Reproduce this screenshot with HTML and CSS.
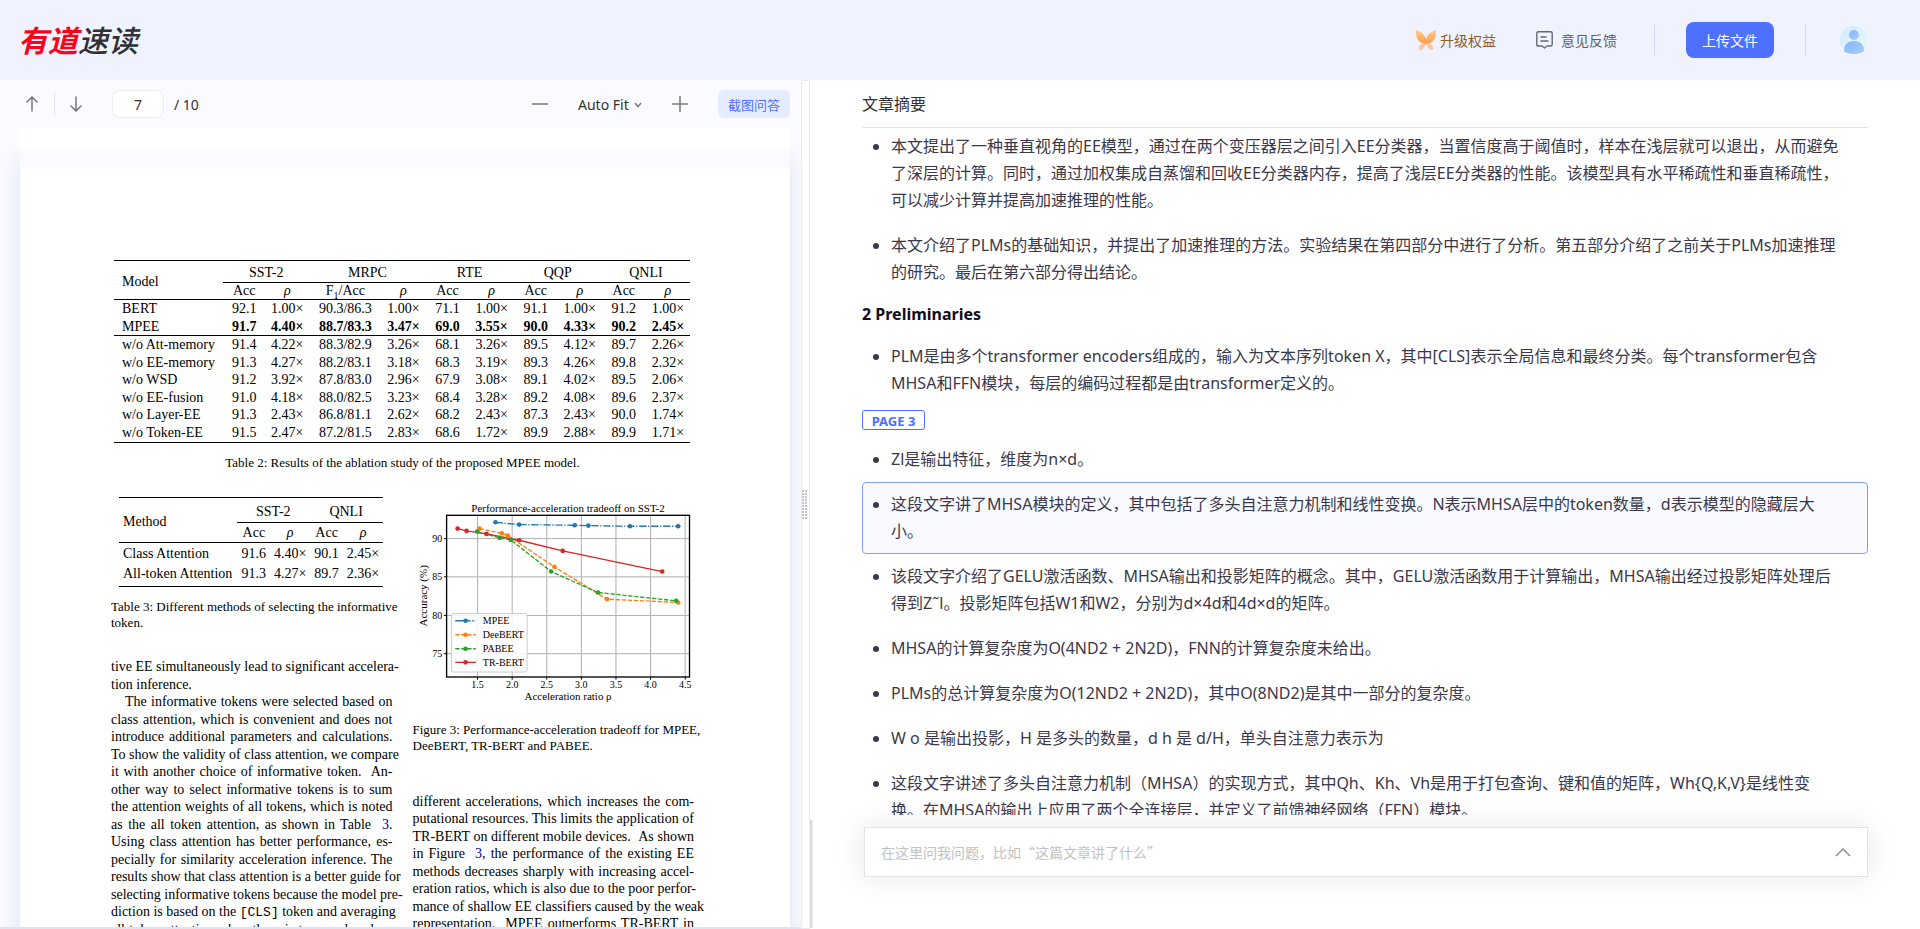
FILE: index.html
```html
<!DOCTYPE html>
<html lang="zh-CN">
<head>
<meta charset="utf-8">
<title>有道速读</title>
<link rel="stylesheet" href="styles.css">
</head>
<body>
<header class="topbar">
  <a class="logo" href="#"><span class="logo-red">有道</span><span class="logo-dark">速读</span></a>
  <nav class="topnav">
    <a class="upgrade" href="#">
      <svg width="20" height="20" viewBox="0 0 20 20" aria-hidden="true">
        <defs><linearGradient id="wing" x1="0" y1="0" x2="0" y2="1"><stop offset="0" stop-color="#ffce8f"/><stop offset="1" stop-color="#ff9a45"/></linearGradient></defs>
        <path d="M0 0C4 1 8.600 4 10 9C11.400 4 16 1 20 0C20.400 6 18.800 11.800 13.500 13.300L10 14.500L6.500 13.300C1.200 11.800-.4 6 0 0Z" fill="url(#wing)"/>
        <path d="M9.300 13.600C6 13.500 3 15 2.500 18.500C2.400 20 5 20.300 6.500 19.300C8.200 18 9 16 9.300 13.600ZM10.700 13.600C14 13.500 17 15 17.500 18.500C17.600 20 15 20.300 13.500 19.300C11.800 18 11 16 10.700 13.600Z" fill="#ffc59a"/>
      </svg>
      升级权益
    </a>
    <a class="feedback" href="#">
      <svg width="17" height="18" viewBox="0 0 17 18" fill="none" stroke="#666873" stroke-width="1.400" stroke-linejoin="round" stroke-linecap="round" aria-hidden="true">
        <path d="M2.200.8H14.800Q16.200.8 16.200 2.200V13.600Q16.200 15 14.800 15H11L8.500 17L6 15H2.200Q.8 15 .8 13.600V2.200Q.8.800 2.200.800Z"/>
        <path d="M5 6H10M5 10H12"/>
      </svg>
      意见反馈
    </a>
    <span class="bar"></span>
    <button class="upload" type="button">上传文件</button>
    <span class="bar"></span>
    <a class="avatar" href="#" aria-label="账户">
      <svg width="32" height="32" viewBox="0 0 32 32" aria-hidden="true">
        <defs>
          <linearGradient id="face" x1="0" y1="0" x2="1" y2="1"><stop offset="0" stop-color="#d3e9fd"/><stop offset="1" stop-color="#e9fbff"/></linearGradient>
          <linearGradient id="body" x1="0" y1="0" x2="1" y2="1"><stop offset="0" stop-color="#83b4fb"/><stop offset="1" stop-color="#a9cffe"/></linearGradient>
        </defs>
        <circle cx="16" cy="16" r="15" fill="url(#face)" stroke="#f7fbff"/>
        <circle cx="16" cy="11" r="5" fill="url(#body)"/>
        <path d="M6 27C6 20.500 10 17 16 17S26 20.500 26 27C23 31 9 31 6 27Z" fill="url(#body)"/>
      </svg>
    </a>
  </nav>
</header>

<main class="workspace">
  <section class="viewer">
    <div class="toolbar">
      <button class="tool" type="button" aria-label="上一页"><svg width="12" height="16" viewBox="0 0 12 16"><path d="M6 15.500V1M.5 6.500L6 1L11.500 6.500"/></svg></button>
      <span class="tool-bar"></span>
      <button class="tool" type="button" aria-label="下一页"><svg width="12" height="16" viewBox="0 0 12 16"><path d="M6 .5V15M.5 9.500L6 15L11.500 9.500"/></svg></button>
      <label class="pager"><input type="text" value="7" aria-label="页码"><span>/ 10</span></label>
      <div class="zoomer">
        <button class="tool" type="button" aria-label="缩小"><svg width="16" height="16" viewBox="0 0 16 16"><path d="M0 8H16"/></svg></button>
        <span class="fit">
          <select aria-label="缩放"><option>Auto Fit</option></select>
          <svg width="8" height="6" viewBox="0 0 8 6"><path d="M1 1L4 4.500L7 1"/></svg>
        </span>
        <button class="tool" type="button" aria-label="放大"><svg width="16" height="16" viewBox="0 0 16 16"><path d="M0 8H16M8 0V16"/></svg></button>
      </div>
      <button class="snap" type="button">截图问答</button>
    </div>

    <div class="pages">
      <div class="sheet sheet-prev"></div>
      <article class="sheet sheet-current">
        <table class="results">
          <colgroup><col class="c-name"><col class="c-acc"><col class="c-rho"><col class="c-wide"><col class="c-rho" span="7"></colgroup>
          <thead>
            <tr><th class="name" rowspan="2">Model</th><th class="sub" colspan="2">SST-2</th><th class="sub" colspan="2">MRPC</th><th class="sub" colspan="2">RTE</th><th class="sub" colspan="2">QQP</th><th class="sub" colspan="2">QNLI</th></tr>
            <tr><th>Acc</th><th><i>ρ</i></th><th>F<small>1</small>/Acc</th><th><i>ρ</i></th><th>Acc</th><th><i>ρ</i></th><th>Acc</th><th><i>ρ</i></th><th>Acc</th><th><i>ρ</i></th></tr>
          </thead>
          <tbody>
            <tr><td class="name">BERT</td><td>92.1</td><td>1.00×</td><td>90.3/86.3</td><td>1.00×</td><td>71.1</td><td>1.00×</td><td>91.1</td><td>1.00×</td><td>91.2</td><td>1.00×</td></tr>
            <tr class="best"><td class="name">MPEE</td><td>91.7</td><td>4.40×</td><td>88.7/83.3</td><td>3.47×</td><td>69.0</td><td>3.55×</td><td>90.0</td><td>4.33×</td><td>90.2</td><td>2.45×</td></tr>
          </tbody>
          <tbody>
            <tr><td class="name">w/o Att-memory</td><td>91.4</td><td>4.22×</td><td>88.3/82.9</td><td>3.26×</td><td>68.1</td><td>3.26×</td><td>89.5</td><td>4.12×</td><td>89.7</td><td>2.26×</td></tr>
            <tr><td class="name">w/o EE-memory</td><td>91.3</td><td>4.27×</td><td>88.2/83.1</td><td>3.18×</td><td>68.3</td><td>3.19×</td><td>89.3</td><td>4.26×</td><td>89.8</td><td>2.32×</td></tr>
            <tr><td class="name">w/o WSD</td><td>91.2</td><td>3.92×</td><td>87.8/83.0</td><td>2.96×</td><td>67.9</td><td>3.08×</td><td>89.1</td><td>4.02×</td><td>89.5</td><td>2.06×</td></tr>
            <tr><td class="name">w/o EE-fusion</td><td>91.0</td><td>4.18×</td><td>88.0/82.5</td><td>3.23×</td><td>68.4</td><td>3.28×</td><td>89.2</td><td>4.08×</td><td>89.6</td><td>2.37×</td></tr>
            <tr><td class="name">w/o Layer-EE</td><td>91.3</td><td>2.43×</td><td>86.8/81.1</td><td>2.62×</td><td>68.2</td><td>2.43×</td><td>87.3</td><td>2.43×</td><td>90.0</td><td>1.74×</td></tr>
            <tr class="last"><td class="name">w/o Token-EE</td><td>91.5</td><td>2.47×</td><td>87.2/81.5</td><td>2.83×</td><td>68.6</td><td>1.72×</td><td>89.9</td><td>2.88×</td><td>89.9</td><td>1.71×</td></tr>
          </tbody>
        </table>
        <p class="caption caption-wide">Table 2: Results of the ablation study of the proposed MPEE model.</p>

        <div class="columns">
          <div class="column">
            <table class="results methods">
              <colgroup><col class="m-name"><col class="m-acc"><col class="m-rho"><col class="m-acc"><col class="m-rho"></colgroup>
              <thead>
                <tr><th class="name" rowspan="2">Method</th><th class="sub" colspan="2">SST-2</th><th class="sub" colspan="2">QNLI</th></tr>
                <tr><th>Acc</th><th><i>ρ</i></th><th>Acc</th><th><i>ρ</i></th></tr>
              </thead>
              <tbody>
                <tr><td class="name">Class Attention</td><td>91.6</td><td>4.40×</td><td>90.1</td><td>2.45×</td></tr>
                <tr class="last"><td class="name">All-token Attention</td><td>91.3</td><td>4.27×</td><td>89.7</td><td>2.36×</td></tr>
              </tbody>
            </table>
            <p class="caption caption-method lines"><span>Table 3: Different methods of selecting the informative</span><span class="short">token.</span></p>
            <p class="prose lines">
              <span>tive EE simultaneously lead to significant accelera-</span>
              <span class="short">tion inference.</span>
              <span class="indent">The informative tokens were selected based on</span>
              <span>class attention, which is convenient and does not</span>
              <span>introduce additional parameters and calculations.</span>
              <span>To show the validity of class attention, we compare</span>
              <span>it with another choice of informative token. &nbsp;An-</span>
              <span>other way to select informative tokens is to sum</span>
              <span>the attention weights of all tokens, which is noted</span>
              <span>as the all token attention, as shown in Table &nbsp;<a href="#">3</a>.</span>
              <span>Using class attention has better performance, es-</span>
              <span>pecially for similarity acceleration inference. The</span>
              <span>results show that class attention is a better guide for</span>
              <span>selecting informative tokens because the model pre-</span>
              <span>diction is based on the <code>[CLS]</code> token and averaging</span>
              <span>all token attention when there is too much redun-</span>
            </p>
          </div>
          <div class="column">
            <svg class="chart" viewBox="39 51 846 624" role="img" aria-label="Performance-acceleration tradeoff on SST-2">
              <g stroke="#b0b0b0" stroke-width="3">
                <path d="M233 106V592M337 106V592M441 106V592M545 106V592M649 106V592M753 106V592M857 106V592"/>
                <path d="M140 176H870M140 291H870M140 407H870M140 522H870"/>
              </g>
              <g fill="none" stroke-width="4">
                <path stroke="#1f77b4" stroke-dasharray="22 5 4 5" d="M287 127L358 134L525 136L566 137L691 139L836 139"/>
                <path stroke="#ff7f0e" stroke-dasharray="13 5" d="M239 146L306 160L324 167L464 261L622 358L836 368"/>
                <path stroke="#2ca02c" stroke-dasharray="13 5" d="M232 155L300 174L333 180L454 275L595 338L830 363"/>
                <path stroke="#d62728" d="M173 146L200 153L260 162L358 181L489 213L788 275"/>
              </g>
              <g fill="#1f77b4"><circle cx="287" cy="127" r="7"/><circle cx="358" cy="134" r="7"/><circle cx="525" cy="136" r="7"/><circle cx="566" cy="137" r="7"/><circle cx="691" cy="139" r="7"/><circle cx="836" cy="139" r="7"/></g>
              <g fill="#ff7f0e"><circle cx="239" cy="146" r="7"/><circle cx="306" cy="160" r="7"/><circle cx="324" cy="167" r="7"/><circle cx="464" cy="261" r="7"/><circle cx="622" cy="358" r="7"/><circle cx="836" cy="368" r="7"/></g>
              <g fill="#2ca02c"><circle cx="232" cy="155" r="7"/><circle cx="300" cy="174" r="7"/><circle cx="333" cy="180" r="7"/><circle cx="454" cy="275" r="7"/><circle cx="595" cy="338" r="7"/><circle cx="830" cy="363" r="7"/></g>
              <g fill="#d62728"><circle cx="173" cy="146" r="7"/><circle cx="200" cy="153" r="7"/><circle cx="260" cy="162" r="7"/><circle cx="358" cy="181" r="7"/><circle cx="489" cy="213" r="7"/><circle cx="788" cy="275" r="7"/></g>
              <rect x="140" y="106" width="730" height="486" fill="none" stroke="#000" stroke-width="4"/>
              <path stroke="#000" stroke-width="3" d="M132 176H140M132 291H140M132 407H140M132 522H140M233 592V600M337 592V600M441 592V600M545 592V600M649 592V600M753 592V600M857 592V600"/>
              <rect x="155" y="401" width="227" height="176" rx="6" fill="#fff" fill-opacity=".85" stroke="#ccc" stroke-width="3"/>
              <g stroke-width="4">
                <path stroke="#1f77b4" d="M166 423H228" stroke-dasharray="46 5 5 5"/><path stroke="#ff7f0e" d="M166 465H228" stroke-dasharray="13 5"/><path stroke="#2ca02c" d="M166 507H228" stroke-dasharray="13 5"/><path stroke="#d62728" d="M166 548H228"/>
              </g>
              <circle cx="197" cy="423" r="7" fill="#1f77b4"/><circle cx="197" cy="465" r="7" fill="#ff7f0e"/><circle cx="197" cy="507" r="7" fill="#2ca02c"/><circle cx="197" cy="548" r="7" fill="#d62728"/>
              <g class="chart-text">
                <text x="249" y="434">MPEE</text><text x="249" y="476">DeeBERT</text><text x="249" y="518">PABEE</text><text x="249" y="559">TR-BERT</text>
                <g text-anchor="end"><text x="127" y="186">90</text><text x="127" y="301">85</text><text x="127" y="417">80</text><text x="127" y="532">75</text></g>
                <g text-anchor="middle"><text x="233" y="626">1.5</text><text x="337" y="626">2.0</text><text x="441" y="626">2.5</text><text x="545" y="626">3.0</text><text x="649" y="626">3.5</text><text x="753" y="626">4.0</text><text x="857" y="626">4.5</text></g>
              </g>
              <g class="chart-title" text-anchor="middle"><text x="505" y="95">Performance-acceleration tradeoff on SST-2</text><text x="505" y="662">Acceleration ratio ρ</text><text transform="translate(82 348) rotate(-90)">Accuracy (%)</text></g>
            </svg>
            <p class="caption caption-figure lines"><span>Figure 3: Performance-acceleration tradeoff for MPEE,</span><span class="short">DeeBERT, TR-BERT and PABEE.</span></p>
            <p class="prose lines">
              <span>different accelerations, which increases the com-</span>
              <span>putational resources. This limits the application of</span>
              <span>TR-BERT on different mobile devices. &nbsp;As shown</span>
              <span>in Figure &nbsp;<a href="#">3</a>, the performance of the existing EE</span>
              <span>methods decreases sharply with increasing accel-</span>
              <span>eration ratios, which is also due to the poor perfor-</span>
              <span>mance of shallow EE classifiers caused by the weak</span>
              <span>representation. &nbsp;MPEE outperforms TR-BERT in</span>
            </p>
          </div>
        </div>
      </article>
    </div>
  </section>

  <div class="splitter">
    <svg width="5" height="30" viewBox="0 0 5 30" aria-hidden="true"><path d="M1 0V30M4 0V30" stroke="#c6c6c6" stroke-width="2" stroke-dasharray="2 1"/></svg>
  </div>

  <section class="summary">
    <h1 class="summary-title">文章摘要</h1>
    <div class="summary-scroll">
      <ul class="notes">
        <li>本文提出了一种垂直视角的EE模型，通过在两个变压器层之间引入EE分类器，当置信度高于阈值时，样本在浅层就可以退出，从而避免了深层的计算。同时，通过加权集成自蒸馏和回收EE分类器内存，提高了浅层EE分类器的性能。该模型具有水平稀疏性和垂直稀疏性，可以减少计算并提高加速推理的性能。</li>
        <li>本文介绍了PLMs的基础知识，并提出了加速推理的方法。实验结果在第四部分中进行了分析。第五部分介绍了之前关于PLMs加速推理的研究。最后在第六部分得出结论。</li>
      </ul>
      <h2 class="chapter">2 Preliminaries</h2>
      <ul class="notes">
        <li>PLM是由多个transformer encoders组成的，输入为文本序列token X，其中[CLS]表示全局信息和最终分类。每个transformer包含MHSA和FFN模块，每层的编码过程都是由transformer定义的。</li>
      </ul>
      <span class="page-tag">PAGE 3</span>
      <ul class="notes">
        <li>Zl是输出特征，维度为n×d。</li>
        <li class="active">这段文字讲了MHSA模块的定义，其中包括了多头自注意力机制和线性变换。N表示MHSA层中的token数量，d表示模型的隐藏层大<wbr>小。</li>
        <li>该段文字介绍了GELU激活函数、MHSA输出和投影矩阵的概念。其中，GELU激活函数用于计算输出，MHSA输出经过投影矩阵处理后得到Z˜l。投影矩阵包括W1和W2，分别为d×4d和4d×d的矩阵。</li>
        <li>MHSA的计算复杂度为O(4ND2 + 2N2D)，FNN的计算复杂度未给出。</li>
        <li>PLMs的总计算复杂度为O(12ND2 + 2N2D)，其中O(8ND2)是其中一部分的复杂度。</li>
        <li>W o 是输出投影，H 是多头的数量，d h 是 d/H，单头自注意力表示为</li>
        <li>这段文字讲述了多头自注意力机制（MHSA）的实现方式，其中Qh、Kh、Vh是用于打包查询、键和值的矩阵，Wh{Q,K,V}是线性变<br>换。在MHSA的输出上应用了两个全连接层，并定义了前馈神经网络（FFN）模块。</li>
      </ul>
    </div>
    <form class="ask">
      <input type="text" placeholder="在这里问我问题，比如“这篇文章讲了什么”" aria-label="提问">
      <button type="button" aria-label="展开"><svg width="16" height="10" viewBox="0 0 16 10"><path d="M1 9L8 2L15 9" fill="none" stroke="#909090" stroke-width="1.500"/></svg></button>
    </form>
  </section>
</main>
</body>
</html>
```
FILE: styles.css
```css
* { box-sizing: border-box; }

body {
  margin: 0;
  height: 100vh;
  display: flex;
  flex-direction: column;
  overflow: hidden;
  background: #fff;
  color: #333;
  font-family: "Noto Sans", "Noto Sans CJK SC", sans-serif;
  font-size: 14px;
}

a { color: inherit; text-decoration: none; }

button, input, select {
  margin: 0;
  padding: 0;
  border: 0;
  background: none;
  color: inherit;
  font: inherit;
}

/* Top bar */
.topbar {
  flex: none;
  height: 80px;
  padding: 0 50px 0 18px;
  display: flex;
  align-items: center;
  justify-content: space-between;
  background: #f0f3ff;
}

.logo {
  display: flex;
  padding-bottom: 3px;
  font-family: "Noto Sans CJK SC", sans-serif;
  font-size: 30px;
  line-height: 40px;
  font-style: italic;
}
.logo-red { color: #fc011a; font-weight: 700; }
.logo-dark { color: #2e3033; font-weight: 500; }

.topnav { display: flex; align-items: center; }
.upgrade, .feedback { display: flex; align-items: center; }
.upgrade { gap: 4px; margin-right: 40px; color: #8c5a2b; }
.feedback { gap: 8px; margin-right: 37px; color: #5c5e68; }
.bar { width: 1px; height: 32px; background: #d5dcfa; }
.upload {
  width: 88px;
  height: 36px;
  margin: 0 31px;
  border-radius: 8px;
  background: #4d70ff;
  color: #fff;
}
.avatar { display: flex; margin-left: 32px; }

/* Work area */
.workspace {
  flex: 1;
  min-height: 0;
  display: grid;
  grid-template-columns: 801fr 9px 1110fr;
}

/* Document viewer */
.viewer {
  min-width: 0;
  min-height: 0;
  display: flex;
  flex-direction: column;
  overflow: hidden;
  background: #fafbff;
  border-bottom: 2px solid #dfe3ef;
}
.toolbar {
  flex: none;
  height: 48px;
  padding: 0 11px 0 20px;
  display: flex;
  align-items: center;
}
.tool { width: 24px; height: 24px; display: grid; place-items: center; }
.toolbar svg { fill: none; stroke: #77787c; stroke-width: 1.5; }
.tool-bar { width: 1px; height: 24px; margin: 0 9px 0 10px; background: #e6e8ee; }
.pager { margin-left: 24px; display: flex; align-items: center; gap: 10px; }
.pager input {
  width: 52px;
  height: 28px;
  border: 1px solid #ebecf0;
  border-radius: 8px;
  background: #fff;
  text-align: center;
}
.zoomer { margin-left: auto; display: flex; align-items: center; }
.fit { position: relative; margin: 0 26px; display: flex; align-items: center; }
.fit select { width: 64px; height: 28px; appearance: none; }
.fit svg { position: absolute; right: 0; top: 12px; pointer-events: none; }
.snap {
  width: 72px;
  height: 28px;
  margin-left: 26px;
  border-radius: 6px;
  background: #e6ecff;
  color: #4d70ff;
  font-size: 13px;
}

.pages { flex: 1; min-height: 0; padding: 0 11px 0 20px; overflow: hidden; }
.sheet { background: #fff; box-shadow: 0 10px 20px rgba(90, 110, 170, .18); }
.sheet-prev { position: relative; height: 21px; box-shadow: none; }
.sheet-current {
  min-height: 1080px;
  padding: 91px 96px 0 91px;
  border-top: 20px solid #fafbff;
  color: #000;
  font-family: "Liberation Serif", serif;
  line-height: 1.25;
}

.results {
  width: calc(100% - 7px);
  margin: 0 4px 0 3px;
  table-layout: fixed;
  border-collapse: collapse;
  border-bottom: 1px solid #000;
  text-align: center;
}
.results th { font-weight: 400; }
.results th, .results td { padding: 0; white-space: nowrap; }
.results thead, .results tbody { border-top: 1px solid #000; }
.results thead tr:first-child { height: 22px; }
.results thead tr + tr { line-height: 16px; }
.results .sub { padding-top: 2px; border-bottom: 1px solid #000; }
.results .name { padding-left: 8px; text-align: left; }
.results thead .name { padding-top: 4px; }
.results .best td { font-weight: 700; }
.results .best .name { font-weight: 400; }
.results .last td { padding-bottom: 1px; }
.results small { font-size: 10px; vertical-align: sub; line-height: 0; }
.c-name { width: 109px; }
.c-acc { width: 42px; }
.c-rho { width: 44px; }
.c-wide { width: 72px; }

.methods { width: auto; margin: 0 10px 0 8px; }
.methods thead tr:first-child { height: 25px; }
.methods thead tr + tr, .methods tbody tr { height: 20px; }
.methods .name { padding-left: 4px; }
.methods .sub { padding-top: 3px; }
.methods td { padding-top: 2px; }
.methods .last td { padding-bottom: 4px; }
.m-name { width: 118px; }
.m-acc { width: 34px; }
.m-rho { width: 39px; }

.caption { margin: 0; font-size: 13px; line-height: 16px; }
.caption-wide { margin: 12px 0 26px; text-align: center; }
.caption-method { margin: 12px 0 27px; }
.caption-figure { margin: 17px 0 39px; }
.columns { display: grid; grid-template-columns: 1fr 1fr; gap: 20px; }
.column { min-width: 0; }
.prose { margin: 0; }
.prose a { color: #00009c; }
.prose code { font-family: "Liberation Mono", monospace; font-size: 13px; line-height: 1; }
.lines span { display: block; white-space: nowrap; text-align-last: justify; }
.lines .short { text-align-last: left; }
.lines .indent { padding-left: 14px; }

.chart { display: block; width: 100%; }
.chart-text { font-size: 30px; }
.chart-title { font-size: 33px; }

/* Splitter */
.splitter {
  position: relative;
  display: grid;
  align-items: center;
  justify-items: start;
  border: 1px solid #ebebeb;
  background: #fff;
}
.splitter::after {
  content: "";
  position: absolute;
  left: 8px;
  bottom: 0;
  width: 3px;
  height: 108px;
  background: linear-gradient(90deg, #d2d2d2, #eee);
}

/* Summary */
.summary {
  min-width: 0;
  min-height: 0;
  padding: 0 52px 52px;
  display: flex;
  flex-direction: column;
}
.summary-title {
  flex: none;
  height: 48px;
  margin: 0;
  border-bottom: 1px solid #e2e2e2;
  font-size: 16px;
  font-weight: 400;
  line-height: 49px;
}
.summary-scroll { flex: 1; min-height: 0; overflow: hidden; color: #3a384a; }
.notes { margin: 0; padding: 0; list-style: none; font-size: 16px; line-height: 27px; }
.notes:first-child { margin-top: -4px; }
.notes li {
  position: relative;
  padding: 8px 23px 8px 28px;
  border: 1px solid transparent;
  border-radius: 4px;
}
.notes li::before {
  content: "";
  position: absolute;
  left: 10px;
  top: 19px;
  width: 6px;
  height: 6px;
  border-radius: 50%;
  background: #3a384a;
}
.notes .active { border-color: #819bff; background: #f8faff; }
.chapter { margin: 0; color: #0f0d20; font-size: 16px; line-height: 39px; }
.page-tag {
  display: block;
  width: 63px;
  height: 20px;
  margin: 4px 0 7px;
  border: 1px solid #4d70ff;
  border-radius: 3px;
  color: #4d70ff;
  font-size: 13px;
  font-weight: 700;
  line-height: 20px;
  text-align: center;
}

.ask {
  flex: none;
  height: 50px;
  margin: 12px 0 0 2px;
  padding: 0 16px;
  display: flex;
  align-items: center;
  border: 1px solid #e3e3e3;
  background: #fff;
  box-shadow: 0 0 30px rgba(0, 0, 0, .1);
}
.ask input { flex: 1; height: 100%; outline: 0; font-family: "Noto Sans CJK SC", sans-serif; }
.ask input::placeholder { color: #c2c2c2; }
.ask button { display: flex; }
```
